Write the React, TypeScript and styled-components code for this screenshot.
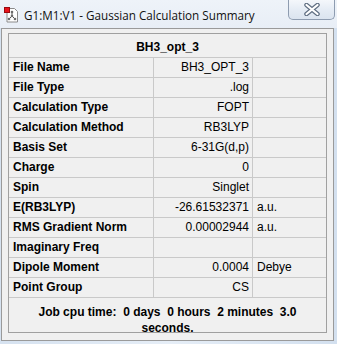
import styled, { createGlobalStyle } from 'styled-components';

const GlobalStyle = createGlobalStyle`
  html, body {
    margin: 0;
    padding: 0;
    background: #dfe8f2;
  }
`;

const Window = styled.div`
  width: 337px;
  height: 344px;
  display: flex;
  flex-direction: column;
  background: linear-gradient(90deg, #d6e2f0 0%, #e6eef7 50%, #d3e0ef 100%);
  overflow: hidden;
`;

const TitleBar = styled.div`
  flex: none;
  height: 28px;
  display: flex;
  align-items: flex-start;
  background: linear-gradient(180deg, #eef3f9 0%, #e8eef6 100%);
`;

const AppIcon = styled.svg`
  margin: 7px 0 0 4px;
  flex: none;
`;

const Title = styled.span`
  margin: 7px 0 0 4px;
  font-family: 'Open Sans', 'Noto Sans', sans-serif;
  font-size: 11.7px;
  line-height: 16px;
  color: #111;
  white-space: nowrap;
`;

const CloseButton = styled.div`
  margin-left: auto;
  margin-right: 2px;
  width: 47px;
  height: 20px;
  box-sizing: border-box;
  border: 1px solid #8e9cb0;
  border-top: none;
  border-radius: 0 0 5px 5px;
  background: linear-gradient(180deg, #f4f7fb 0%, #e4ebf4 55%, #dbe4ef 100%);
  display: flex;
  align-items: center;
  justify-content: center;
`;

const Client = styled.div`
  margin: 0 3px 3px 1px;
  flex: 1;
  border: 1px solid #9a9a9a;
  background: #f0f0f0;
  padding: 4px 6px 6px 6px;
  display: flex;
  flex-direction: column;
`;

const Table = styled.div`
  border: 1px solid #a0a0a0;
  font-family: 'Liberation Sans', Arial, sans-serif;
  font-size: 12px;
  color: #000;
  background: #f0f0f0;
`;

const Header = styled.div`
  height: 23px;
  display: flex;
  align-items: center;
  justify-content: center;
  font-weight: bold;
  padding-top: 2px;
  box-sizing: border-box;
`;

const Row = styled.div`
  display: grid;
  grid-template-columns: 144px 99px 74px;
  height: 20px;
  box-sizing: border-box;
  border-top: 1px solid #c9c9c9;
`;

const Cell = styled.div<{ $align?: 'left' | 'right'; $bold?: boolean; $divider?: boolean }>`
  height: 19px;
  line-height: 19px;
  padding: 0 ${(p) => (p.$align === 'right' ? '3px' : '4px')} 0 ${(p) => (p.$align === 'right' ? '0' : '4px')};
  text-align: ${(p) => p.$align ?? 'left'};
  font-weight: ${(p) => (p.$bold ? 'bold' : 'normal')};
  border-left: ${(p) => (p.$divider ? '1px solid #c9c9c9' : 'none')};
  white-space: nowrap;
  overflow: hidden;
`;

const Footer = styled.div`
  border-top: 1px solid #c9c9c9;
  height: 35px;
  box-sizing: border-box;
  padding-top: 6px;
  text-align: center;
  font-weight: bold;
  line-height: 16px;
  white-space: pre;
`;

const rows: { label: string; value: string; unit?: string }[] = [
  { label: 'File Name', value: 'BH3_OPT_3' },
  { label: 'File Type', value: '.log' },
  { label: 'Calculation Type', value: 'FOPT' },
  { label: 'Calculation Method', value: 'RB3LYP' },
  { label: 'Basis Set', value: '6-31G(d,p)' },
  { label: 'Charge', value: '0' },
  { label: 'Spin', value: 'Singlet' },
  { label: 'E(RB3LYP)', value: '-26.61532371', unit: 'a.u.' },
  { label: 'RMS Gradient Norm', value: '0.00002944', unit: 'a.u.' },
  { label: 'Imaginary Freq', value: '' },
  { label: 'Dipole Moment', value: '0.0004', unit: 'Debye' },
  { label: 'Point Group', value: 'CS' },
];

const App = () => {
  return (
    <Window>
      <GlobalStyle />
      <TitleBar>
        <AppIcon width="16" height="16" viewBox="0 0 16 16">
          <path d="M3 1.5h7.5l3 3v10.5h-10.5z" fill="#fff" stroke="#8a8a8a" />
          <line x1="8" y1="5" x2="8" y2="9" stroke="#555" />
          <line x1="8" y1="9" x2="5" y2="12" stroke="#555" />
          <line x1="8" y1="9" x2="11" y2="12" stroke="#555" />
          <circle cx="8" cy="5" r="1.3" fill="#6b6b6b" />
          <circle cx="8" cy="9" r="1.3" fill="#6b6b6b" />
          <circle cx="5" cy="12" r="1.3" fill="#6b6b6b" />
          <circle cx="11" cy="12" r="1.3" fill="#6b6b6b" />
          <rect x="0.5" y="0.5" width="5" height="5" fill="#e8141c" stroke="#9a0a10" />
        </AppIcon>
        <Title>G1:M1:V1 - Gaussian Calculation Summary</Title>
        <CloseButton>
          <svg width="16" height="13" viewBox="0 0 16 13">
            <path d="M2.5 2l11 9M13.5 2l-11 9" stroke="#5f6e82" strokeWidth="4.5" strokeLinecap="round" />
            <path d="M2.5 2l11 9M13.5 2l-11 9" stroke="#ffffff" strokeWidth="2.2" strokeLinecap="round" />
          </svg>
        </CloseButton>
      </TitleBar>
      <Client>
        <Table>
          <Header>BH3_opt_3</Header>
          {rows.map((r) => (
            <Row key={r.label}>
              <Cell $bold>{r.label}</Cell>
              <Cell $align="right" $divider>
                {r.value}
              </Cell>
              <Cell $divider>{r.unit ?? ''}</Cell>
            </Row>
          ))}
          <Footer>{'Job cpu time:  0 days  0 hours  2 minutes  3.0\nseconds.'}</Footer>
        </Table>
      </Client>
    </Window>
  );
};

export default App;
